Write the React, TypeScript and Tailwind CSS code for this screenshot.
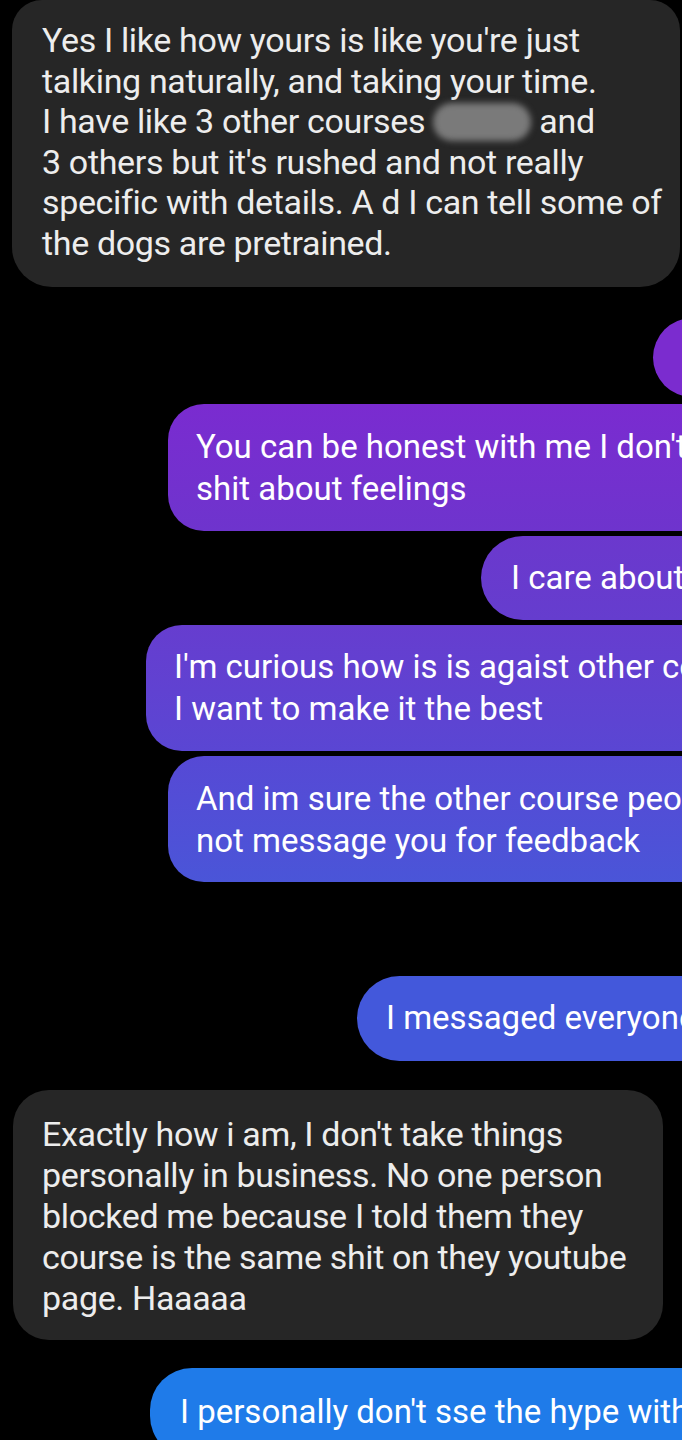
export default function App() {
  return (
    <div className="w-full h-[1440px] bg-black overflow-hidden font-['Roboto',_'Liberation_Sans',_sans-serif] antialiased">
      <div className="flex flex-col">
        {/* incoming */}
        <div className="ml-[12px] w-[668px] bg-[#262626] rounded-b-[40px] rounded-t-[30px] pl-[30px] pr-[8px] pt-[20px] pb-[23px] text-[#ededed] text-[34px] leading-[40.6px] tracking-[-0.35px] whitespace-nowrap">
          Yes I like how yours is like you're just
          <br />
          talking naturally, and taking your time.
          <br />I have like 3 other courses{" "}
          <span className="inline-block align-middle w-[98px] h-[38px] rounded-full bg-[#7a7a7a] blur-[3px] -mt-[4px]"></span>{" "}
          and
          <br />3 others but it's rushed and not really
          <br />
          specific with details. A d I can tell some of
          <br />
          the dogs are pretrained.
        </div>

        {/* outgoing */}
        <div className="mt-[31px] ml-[653px] w-[120px] h-[79px] rounded-l-full bg-[#7b2ccf]"></div>

        <div className="mt-[7px] ml-[168px] w-[620px] rounded-l-[36px] bg-gradient-to-b from-[#7a2bd0] to-[#6e34cd] pl-[28px] pt-[22px] pb-[21px] text-white text-[33px] leading-[42px] whitespace-nowrap">
          You can be honest with me I don't give a
          <br />
          shit about feelings
        </div>

        <div className="mt-[5px] ml-[481px] w-[300px] h-[84px] rounded-l-full bg-gradient-to-b from-[#6b38cd] to-[#653dce] pl-[30px] flex items-center text-white text-[33px] whitespace-nowrap">
          I care about the product
        </div>

        <div className="mt-[5px] ml-[146px] w-[640px] rounded-l-[36px] bg-gradient-to-b from-[#663dcf] to-[#5a46d3] pl-[28px] pt-[21px] pb-[21px] text-white text-[33px] leading-[42px] whitespace-nowrap">
          I'm curious how is is agaist other courses
          <br />I want to make it the best
        </div>

        <div className="mt-[5px] ml-[168px] w-[620px] rounded-l-[36px] bg-gradient-to-b from-[#5649d5] to-[#4a55d8] pl-[28px] pt-[22px] pb-[20px] text-white text-[33px] leading-[42px] whitespace-nowrap">
          And im sure the other course people
          <br />
          not message you for feedback
        </div>

        <div className="mt-[94px] ml-[357px] w-[400px] h-[85px] rounded-l-full bg-[#4358db] pl-[29px] flex items-center text-white text-[33px] whitespace-nowrap">
          I messaged everyone
        </div>

        {/* incoming */}
        <div className="mt-[29px] ml-[13px] w-[650px] bg-[#262626] rounded-[36px] pl-[29px] pr-[8px] pt-[24px] pb-[21px] text-[#ededed] text-[34px] leading-[41px] tracking-[-0.35px] whitespace-nowrap">
          Exactly how i am, I don't take things
          <br />
          personally in business. No one person
          <br />
          blocked me because I told them they
          <br />
          course is the same shit on they youtube
          <br />
          page. Haaaaa
        </div>

        {/* outgoing */}
        <div className="mt-[28px] ml-[150px] w-[640px] h-[90px] rounded-l-[42px] bg-[#1f7be9] pl-[30px] pt-[23px] text-white text-[33px] leading-[42px] whitespace-nowrap">
          I personally don't sse the hype with
        </div>
      </div>
    </div>
  );
}
